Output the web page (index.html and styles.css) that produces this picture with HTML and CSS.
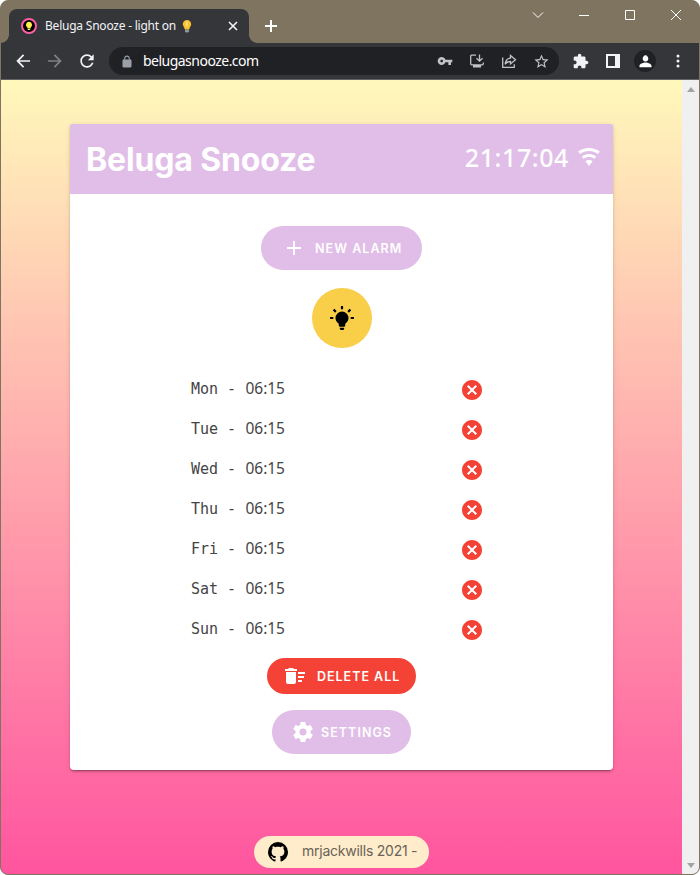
FILE: index.html
```html
<!DOCTYPE html>
<html lang="en">
<head>
<meta charset="utf-8">
<title>Beluga Snooze - light on</title>
<link rel="stylesheet" href="styles.css">
</head>
<body>
<div class="window">
  <header class="titlebar">
    <div class="tab">
      <svg class="favicon" width="16" height="16" viewBox="0 0 16 16"><circle cx="8" cy="8" r="7" fill="#000" stroke="#fc5fa3" stroke-width="2"/><path d="M8 3.800a3 3 0 0 1 1.700 5.500v1.300H6.300V9.300A3 3 0 0 1 8 3.800zM6.800 11h2.400v1H6.800z" fill="#fff04a"/></svg>
      <span class="tab-title">Beluga Snooze - light on</span>
      <svg class="tab-bulb" width="10" height="13" viewBox="0 0 10 13"><path d="M5 0a4.200 4.200 0 0 1 4.200 4.200C9.200 6.300 7.400 7 7.200 9.400H2.800C2.600 7 .8 6.300.8 4.200A4.200 4.200 0 0 1 5 0z" fill="#fbc02d"/><path d="M3.800 1.500h2v5h-2z" fill="#ffe07a"/><path d="M3 9.400h4v2.200L6 12.600H4l-1-1z" fill="#8d989e"/></svg>
      <svg class="tab-close" width="10" height="10" viewBox="0 0 10 10"><path d="M1 1l8 8M9 1l-8 8" stroke="#f1f3f4" stroke-width="1.600"/></svg>
    </div>
    <svg class="new-tab" width="12" height="12" viewBox="0 0 12 12"><path d="M6 0v12M0 6h12" stroke="#fff" stroke-width="2"/></svg>
    <div class="controls">
      <svg width="12" height="12" viewBox="0 0 12 12"><path d="M1 3.500l5 5 5-5"/></svg>
      <svg width="12" height="12" viewBox="0 0 12 12"><path d="M1 6.500h10"/></svg>
      <svg width="12" height="12" viewBox="0 0 12 12"><path d="M1.500 1.500h9v9h-9z"/></svg>
      <svg width="12" height="12" viewBox="0 0 12 12"><path d="M1 1l10 10M11 1L1 11"/></svg>
    </div>
  </header>
  <div class="toolbar">
    <svg class="nav" width="20" height="20" viewBox="0 0 24 24"><path d="M20.500 11H7.830l5.590-5.590L12 4l-8 8 8 8 1.410-1.410L7.830 13H20.500z"/></svg>
    <svg class="nav dim" width="20" height="20" viewBox="0 0 24 24"><path d="M3.500 11h12.670l-5.590-5.590L12 4l8 8-8 8-1.410-1.410L16.170 13H3.500z"/></svg>
    <svg class="nav" width="20" height="20" viewBox="0 0 24 24"><path d="M17.650 6.350C16.200 4.900 14.210 4 12 4c-4.420 0-7.990 3.580-7.990 8s3.570 8 7.990 8c3.730 0 6.840-2.550 7.730-6h-2.080c-.82 2.330-3.040 4-5.650 4-3.310 0-6-2.690-6-6s2.690-6 6-6c1.660 0 3.140.69 4.220 1.780L13 11h7V4l-2.350 2.350z"/></svg>
    <div class="omnibox">
      <svg class="lock" width="12" height="13" viewBox="3 0 18 23"><path d="M18 8h-1V6c0-2.760-2.240-5-5-5S7 3.240 7 6v2H6c-1.100 0-2 .9-2 2v10c0 1.100.9 2 2 2h12c1.100 0 2-.9 2-2V10c0-1.100-.9-2-2-2zM8.900 6c0-1.710 1.390-3.100 3.100-3.100s3.100 1.390 3.100 3.100v2H8.900V6z"/></svg>
      <span class="url">belugasnooze.com</span>
      <div class="omni-icons">
        <svg width="16" height="16" viewBox="0 0 24 24"><path d="M12.650 10C11.830 7.670 9.610 6 7 6c-3.310 0-6 2.690-6 6s2.690 6 6 6c2.610 0 4.830-1.670 5.650-4H17v4h4v-4h2v-4H12.650zM7 14c-1.100 0-2-.9-2-2s.9-2 2-2 2 .9 2 2-.9 2-2 2z"/></svg>
        <svg width="16" height="16" viewBox="0 0 16 16"><path class="line" d="M7 2.200H2.700a1 1 0 0 0-1 1v7.600a1 1 0 0 0 1 1h10.600a1 1 0 0 0 1-1V9.500M10.500 1.500v6M7.500 5.200l3 3 3-3"/><path d="M4 12h8v2.500H4z"/></svg>
        <svg width="16" height="16" viewBox="0 0 16 16"><path class="line" d="M1.700 4.500v9.800h11.600v-3M9.500 2.500l5 4.200-5 4.200V8.500C7 8.500 5.500 9.300 4.200 11.200 4.600 7.500 6.500 5.300 9.500 5z"/></svg>
        <svg width="17" height="17" viewBox="0 0 24 24"><path d="M22 9.240l-7.190-.62L12 2 9.190 8.630 2 9.240l5.460 4.730L5.820 21 12 17.270 18.180 21l-1.630-7.030L22 9.240zM12 15.400l-3.760 2.270 1-4.280-3.320-2.880 4.380-.38L12 6.100l1.710 4.040 4.380.38-3.320 2.880 1 4.280L12 15.400z"/></svg>
      </div>
    </div>
    <div class="actions">
      <svg width="16" height="16" viewBox="1 0 23 23"><path d="M20.500 11H19V7c0-1.100-.9-2-2-2h-4V3.500C13 2.120 11.880 1 10.500 1S8 2.120 8 3.500V5H4c-1.100 0-1.990.9-1.990 2v3.800H3.500c1.490 0 2.700 1.210 2.700 2.700s-1.210 2.700-2.700 2.700H2V20c0 1.100.9 2 2 2h3.800v-1.500c0-1.490 1.210-2.700 2.700-2.700 1.490 0 2.700 1.210 2.700 2.700V22H17c1.100 0 2-.9 2-2v-4h1.500c1.380 0 2.500-1.120 2.500-2.500S21.880 11 20.500 11z"/></svg>
      <svg width="14" height="14" viewBox="0 0 14 14"><path fill-rule="evenodd" d="M0 0h14v14H0zM2 2v10h7V2z"/></svg>
      <span class="avatar"><svg width="17" height="17" viewBox="0 0 24 24"><path d="M12 12c2.210 0 4-1.790 4-4s-1.790-5-4-5-4 2.790-4 5 1.790 4 4 4zm0 1.500c-2.670 0-8.500 1.840-8.500 4.500v2h17v-2c0-2.660-5.830-4.500-8.500-4.500z"/></svg></span>
      <svg class="dots" width="4" height="14" viewBox="0 0 4 14"><circle cx="2" cy="2" r="1.500"/><circle cx="2" cy="7" r="1.500"/><circle cx="2" cy="12" r="1.500"/></svg>
    </div>
  </div>
  <div class="viewport">
    <main class="page">
      <section class="card">
        <div class="card-head">
          <h1>Beluga Snooze</h1>
          <span class="clock">21:17:04</span>
          <svg class="wifi" width="24" height="24" viewBox="0 0 24 24"><path d="M12,21L15.600,16.200C14.600,15.450 13.350,15 12,15C10.650,15 9.400,15.450 8.400,16.200L12,21M12,3C7.950,3 4.210,4.340 1.200,6.600L3,9C5.500,7.120 8.620,6 12,6C15.380,6 18.500,7.120 21,9L22.800,6.600C19.790,4.340 16.050,3 12,3M12,9C9.300,9 6.810,9.890 4.800,11.400L6.600,13.800C8.100,12.670 9.970,12 12,12C14.030,12 15.900,12.670 17.400,13.800L19.200,11.400C17.190,9.890 14.700,9 12,9Z"/></svg>
        </div>
        <div class="card-body">
          <button class="btn new"><svg width="24" height="24" viewBox="0 0 24 24"><path d="M19,13H13V19H11V13H5V11H11V5H13V11H19V13Z"/></svg><span>NEW ALARM</span></button>
          <button class="bulb"><svg width="26" height="26" viewBox="0 0 24 24"><path d="M12,6A6,6 0 0,1 18,12C18,14.220 16.790,16.160 15,17.200V19A1,1 0 0,1 14,20H10A1,1 0 0,1 9,19V17.200C7.210,16.160 6,14.220 6,12A6,6 0 0,1 12,6M14,21V22A1,1 0 0,1 13,23H11A1,1 0 0,1 10,22V21H14M20,11H23V13H20V11M1,11H4V13H1V11M13,1V4H11V1H13M4.920,3.500L7.050,5.640L5.630,7.050L3.500,4.930L4.920,3.500M16.950,5.630L19.070,3.500L20.500,4.930L18.370,7.050L16.950,5.630Z"/></svg></button>
          <svg class="defs" width="0" height="0"><symbol id="remove" viewBox="0 0 24 24"><path d="M12,2C17.530,2 22,6.470 22,12C22,17.530 17.530,22 12,22C6.470,22 2,17.530 2,12C2,6.470 6.470,2 12,2M15.590,7L12,10.590L8.410,7L7,8.410L10.590,12L7,15.590L8.410,17L12,13.410L15.590,17L17,15.590L13.410,12L17,8.410L15.590,7Z"/></symbol></svg>
          <ul class="alarms">
            <li><span class="day">Mon -</span><span class="time">06:15</span><svg width="24" height="24"><use href="#remove"/></svg></li>
            <li><span class="day">Tue -</span><span class="time">06:15</span><svg width="24" height="24"><use href="#remove"/></svg></li>
            <li><span class="day">Wed -</span><span class="time">06:15</span><svg width="24" height="24"><use href="#remove"/></svg></li>
            <li><span class="day">Thu -</span><span class="time">06:15</span><svg width="24" height="24"><use href="#remove"/></svg></li>
            <li><span class="day">Fri -</span><span class="time">06:15</span><svg width="24" height="24"><use href="#remove"/></svg></li>
            <li><span class="day">Sat -</span><span class="time">06:15</span><svg width="24" height="24"><use href="#remove"/></svg></li>
            <li><span class="day">Sun -</span><span class="time">06:15</span><svg width="24" height="24"><use href="#remove"/></svg></li>
          </ul>
          <button class="btn delete"><svg width="24" height="24" viewBox="0 0 24 24"><path d="M15,16H19V18H15V16M15,8H22V10H15V8M15,12H21V14H15V12M3,18A2,2 0 0,0 5,20H11A2,2 0 0,0 13,18V8H3V18M14,5H11L10,4H6L5,5H2V7H14V5Z"/></svg><span>DELETE ALL</span></button>
          <button class="btn settings"><svg width="24" height="24" viewBox="0 0 24 24"><path d="M12,15.500A3.500,3.500 0 0,1 8.500,12A3.500,3.500 0 0,1 12,8.500A3.500,3.500 0 0,1 15.500,12A3.500,3.500 0 0,1 12,15.500M19.430,12.970C19.470,12.650 19.500,12.330 19.500,12C19.500,11.670 19.470,11.340 19.430,11L21.540,9.370C21.730,9.220 21.780,8.950 21.660,8.730L19.660,5.270C19.540,5.050 19.270,4.960 19.050,5.050L16.560,6.050C16.040,5.660 15.500,5.320 14.870,5.070L14.500,2.420C14.460,2.180 14.250,2 14,2H10C9.750,2 9.540,2.180 9.500,2.420L9.130,5.070C8.500,5.320 7.960,5.660 7.440,6.050L4.950,5.050C4.730,4.960 4.460,5.050 4.340,5.270L2.340,8.730C2.210,8.950 2.270,9.220 2.460,9.370L4.570,11C4.530,11.340 4.500,11.670 4.500,12C4.500,12.330 4.530,12.650 4.570,12.970L2.460,14.630C2.270,14.780 2.210,15.050 2.340,15.270L4.340,18.730C4.460,18.950 4.730,19.030 4.950,18.950L7.440,17.940C7.960,18.340 8.500,18.680 9.130,18.930L9.500,21.580C9.540,21.820 9.750,22 10,22H14C14.250,22 14.460,21.820 14.500,21.580L14.870,18.930C15.500,18.670 16.040,18.340 16.560,17.940L19.050,18.950C19.270,19.030 19.540,18.950 19.660,18.730L21.660,15.270C21.780,15.050 21.730,14.780 21.540,14.630L19.430,12.970Z"/></svg><span>SETTINGS</span></button>
        </div>
      </section>
      <footer class="credit">
        <svg width="24" height="24" viewBox="0 0 24 24"><path d="M12,2A10,10 0 0,0 2,12C2,16.420 4.870,20.170 8.840,21.500C9.340,21.580 9.500,21.270 9.500,21C9.500,20.770 9.500,20.140 9.500,19.310C6.730,19.910 6.140,17.970 6.140,17.970C5.680,16.810 5.030,16.500 5.030,16.500C4.120,15.880 5.100,15.900 5.100,15.900C6.100,15.970 6.630,16.930 6.630,16.930C7.500,18.450 8.970,18 9.540,17.760C9.630,17.110 9.890,16.670 10.170,16.420C7.950,16.170 5.620,15.310 5.620,11.500C5.620,10.390 6,9.500 6.650,8.790C6.550,8.540 6.200,7.500 6.750,6.150C6.750,6.150 7.590,5.880 9.500,7.170C10.290,6.950 11.150,6.840 12,6.840C12.850,6.840 13.710,6.950 14.500,7.170C16.410,5.880 17.250,6.150 17.250,6.150C17.800,7.500 17.450,8.540 17.350,8.790C18,9.500 18.380,10.390 18.380,11.500C18.380,15.320 16.040,16.160 13.810,16.410C14.170,16.720 14.500,17.330 14.500,18.260C14.500,19.600 14.500,20.680 14.500,21C14.500,21.270 14.660,21.590 15.170,21.500C19.140,20.160 22,16.420 22,12A10,10 0 0,0 12,2Z"/></svg>
        <span>mrjackwills 2021 -</span>
      </footer>
    </main>
    <div class="scrollbar">
      <svg width="8" height="5" viewBox="0 0 8 5"><path d="M4 0l4 5H0z"/></svg>
      <svg width="8" height="5" viewBox="0 0 8 5"><path d="M0 0h8L4 5z"/></svg>
    </div>
  </div>
</div>
</body>
</html>
```

FILE: styles.css
```css
* { box-sizing: border-box; }
body { margin: 0; background: #fff; overflow: hidden; }
svg { display: block; flex: none; }
button { border: 0; padding: 0; margin: 0; }

.window {
  width: 700px;
  height: 875px;
  display: flex;
  flex-direction: column;
  background: #7f7460;
  border: 1px solid #7f7460;
  border-radius: 8px;
  overflow: hidden;
}

.titlebar { height: 42px; display: flex; align-items: flex-start; flex: none; }
.tab {
  position: relative;
  width: 240px;
  height: 34px;
  margin: 8px 0 0 8px;
  padding: 0 11px 0 12px;
  display: flex;
  align-items: center;
  background: #35363a;
  border-radius: 8px 8px 0 0;
}
.tab::before, .tab::after {
  content: "";
  position: absolute;
  bottom: 0;
  width: 8px;
  height: 8px;
}
.tab::before { left: -8px; background: radial-gradient(circle at 0 0, transparent 7.500px, #35363a 8px); }
.tab::after { right: -8px; background: radial-gradient(circle at 100% 0, transparent 7.500px, #35363a 8px); }
.tab-title {
  margin-left: 8px;
  width: 131px;
  white-space: nowrap;
  font: 12px/16px "Noto Sans", sans-serif;
  letter-spacing: -0.220px;
  color: #f1f3f4;
}
.tab-bulb { margin-left: 6px; }
.tab-close { margin-left: auto; }
.new-tab { margin: 19px 0 0 16px; }
.controls { margin: 8px 17px 0 auto; display: flex; gap: 34px; }
.controls path { fill: none; stroke: #fff; stroke-width: 1; }

.toolbar {
  height: 37px;
  flex: none;
  display: flex;
  align-items: center;
  padding: 0 19px 0 12px;
  background: #35363a;
  border-bottom: 1px solid #626166;
}
.nav { fill: #f1f3f4; margin-right: 12px; }
.nav.dim { fill: #808184; }
.omnibox {
  width: 450px;
  height: 28px;
  display: flex;
  align-items: center;
  padding: 0 9px 0 12px;
  background: #202124;
  border-radius: 14px;
}
.lock { fill: #9aa0a6; }
.url {
  margin-left: 10px;
  font: 14px/20px "Noto Sans", sans-serif;
  letter-spacing: -0.520px;
  color: #fff;
}
.omni-icons { margin-left: auto; display: flex; align-items: center; gap: 16px; fill: #c0c2c4; }
.line { fill: none; stroke: #c0c2c4; stroke-width: 1.300; }
.actions { margin-left: auto; display: flex; align-items: center; fill: #f1f3f4; }
.actions > svg:first-child { margin-right: 17px; }
.avatar {
  width: 22px;
  height: 22px;
  margin: 0 20px 0 14px;
  display: flex;
  align-items: center;
  justify-content: center;
  border-radius: 50%;
  background: #202124;
  fill: #fff;
}

.viewport { flex: 1; display: flex; min-height: 0; }
.page {
  flex: 1;
  display: flex;
  flex-direction: column;
  align-items: center;
  padding-top: 44px;
  background: linear-gradient(#fff8bb, #ff559f);
}
.scrollbar {
  width: 17px;
  padding: 7px 0 6px;
  display: flex;
  flex-direction: column;
  align-items: center;
  justify-content: space-between;
  background: #f0f0f0;
  fill: #a3a3a3;
}

.card {
  width: 543px;
  height: 646px;
  background: #fff;
  border-radius: 2px 2px 4px 4px;
  box-shadow: 0 3px 1px -2px rgba(0,0,0,.2), 0 2px 2px rgba(0,0,0,.14), 0 1px 5px rgba(0,0,0,.12);
}
.card-head {
  height: 70px;
  display: flex;
  align-items: center;
  padding: 0 12px 0 16px;
  background: #e1bee7;
  border-radius: 2px 2px 0 0;
  color: #fff;
}
h1 {
  margin: 0;
  padding-top: 2px;
  font: 700 32px/40px Inter, sans-serif;
  letter-spacing: -0.150px;
}
.clock {
  margin-left: auto;
  margin-top: -4px;
  font: 500 25px/34px "Noto Sans", sans-serif;
  letter-spacing: 0.600px;
}
.wifi { fill: #fff; margin: -4px 0 0 8px; }

.card-body { display: flex; flex-direction: column; align-items: center; padding-top: 32px; }
.btn {
  display: flex;
  align-items: center;
  background: #e1bee7;
  border-radius: 22px;
  color: #fff;
  fill: #fff;
  font: 600 12.500px/20px Inter, sans-serif;
  letter-spacing: 1.050px;
  white-space: nowrap;
}
.btn span { padding-top: 2px; }
.new { width: 161px; height: 44px; padding-left: 21px; gap: 9px; }
.bulb {
  width: 60px;
  height: 60px;
  margin: 18px 0 22px;
  display: flex;
  align-items: center;
  justify-content: center;
  border-radius: 50%;
  background: #f9ce49;
}
.defs { position: absolute; }
.alarms { list-style: none; margin: 0; padding: 0; width: 301px; }
.alarms li {
  height: 40px;
  display: flex;
  align-items: center;
  padding-right: 8px;
  color: #444;
}
.day { width: 54.500px; margin-top: -2px; font: 15px/20px "DejaVu Sans Mono", monospace; }
.time { margin-top: -4px; font: 15.500px/20px "Noto Sans", sans-serif; letter-spacing: -0.050px; }
.alarms svg { margin-left: auto; fill: #f44336; }
.delete { width: 149px; height: 36px; margin: 8px 0 16px; padding-left: 16px; gap: 10px; background: #f44336; letter-spacing: 0.980px; }
.settings { width: 139px; height: 44px; padding-left: 19px; gap: 6px; }

.credit {
  width: 175px;
  height: 32px;
  margin-top: 66px;
  padding: 0 0 2px 12px;
  display: flex;
  align-items: center;
  gap: 12px;
  border-radius: 16px;
  background: #ffeccb;
  font: 14px/20px Inter, sans-serif;
  letter-spacing: -0.240px;
  color: #6a6357;
  white-space: nowrap;
}
.credit svg { margin-top: 2px; }
```
